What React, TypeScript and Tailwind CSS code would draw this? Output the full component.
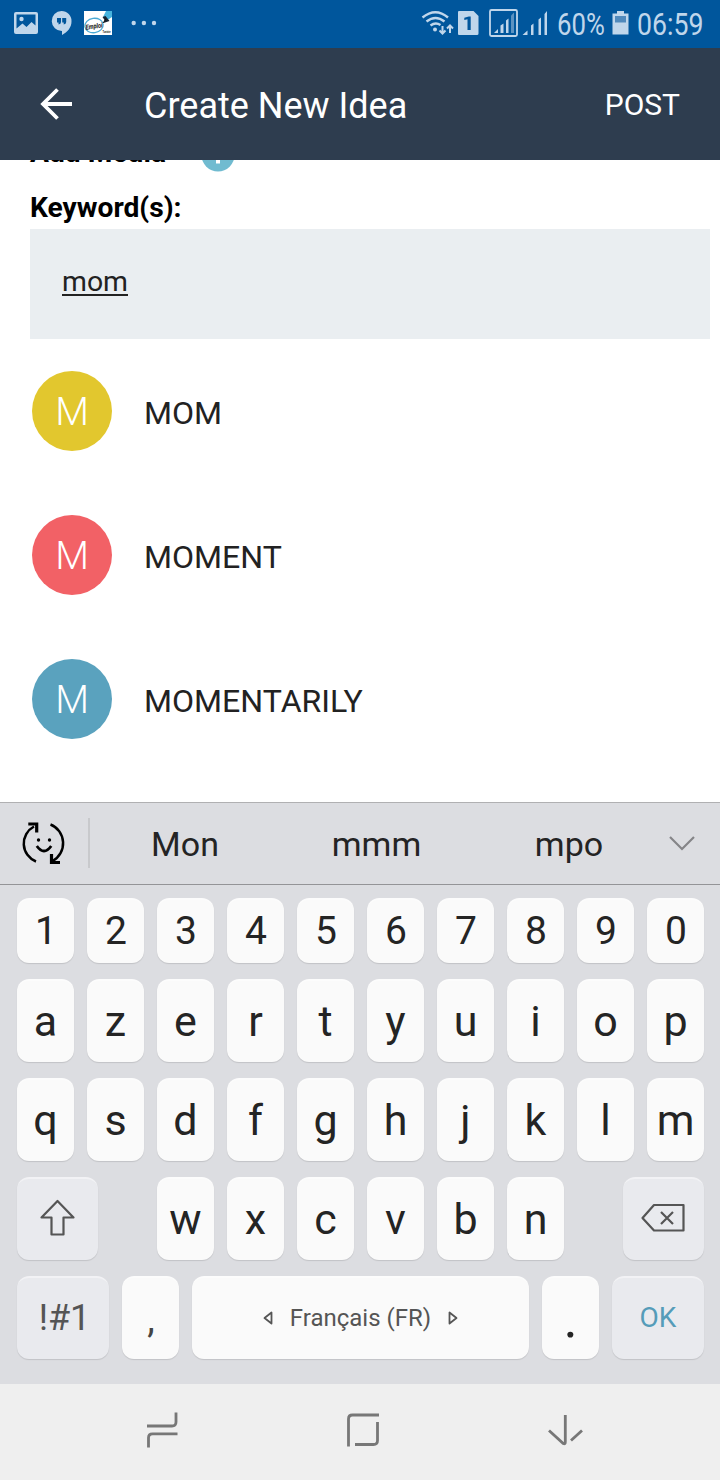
import React from "react";

type KeyProps = { children?: React.ReactNode; className?: string };

function Key({ children, className = "w-[57px] bg-[#fafafa] text-[#242424]" }: KeyProps) {
  return (
    <div
      className={`flex h-full shrink-0 items-center justify-center rounded-[12px] border-t-2 border-white/40 shadow-[0_1px_1px_rgba(0,0,0,0.12)] ${className}`}
    >
      {children}
    </div>
  );
}

function LetterRow({ letters }: { letters: string }) {
  return (
    <div className="flex h-[83px] gap-[13px] text-[43px] leading-none">
      {letters.split("").map((c) => (
        <Key key={c}>
          <span className="pb-px">{c}</span>
        </Key>
      ))}
    </div>
  );
}

function StatusBar() {
  return (
    <div className="flex h-12 shrink-0 items-center bg-[#00569c] text-[#c0d6eb]">
      <svg width="170" height="48" viewBox="0 0 170 48" className="shrink-0">
        <rect x="14" y="12" width="24" height="22" rx="2" fill="#c0d6eb" />
        <path d="M16.500 14.500h19v11l-4-3.500-5 5-4-3.500-6 5z" fill="#00569c" />
        <circle cx="21.500" cy="19" r="2.200" fill="#c0d6eb" />
        <path d="M61.500 11a10 10 0 0 1 10 10.500c0 6-4 10.500-9.500 13.500v-4a9.800 9.800 0 0 1-.5-20z" fill="#c0d6eb" />
        <path d="M57 18h4v4q0 2-2.500 2.500v-2H57zM62.200 18h4v4q0 2-2.500 2.500v-2h-1.500z" fill="#00569c" />
        <rect x="84" y="11" width="28" height="24" fill="#fff" />
        <ellipse cx="94" cy="25.500" rx="9.200" ry="7.200" fill="none" stroke="#4aa9d4" strokeWidth="1.300" transform="rotate(-8 94 25.500)" />
        <path d="M106 11h6v6l-6 4-3-4z" fill="#47b3dd" />
        <path d="M102.500 17l3-1 4 5-6 2 1-3z" fill="#172331" />
        <path d="M103 23l3-4" stroke="#111" strokeWidth="1" />
        <text x="85.500" y="28.500" fontSize="6.800" fontWeight="700" fontStyle="italic" fill="#111" fontFamily="Roboto, sans-serif" textLength="17" lengthAdjust="spacingAndGlyphs" transform="rotate(-8 94 26)">Emploi</text>
        <text x="102.500" y="33" fontSize="3.500" fontWeight="700" fill="#222" fontFamily="Roboto, sans-serif" textLength="8" lengthAdjust="spacingAndGlyphs">Tunisie</text>
        <circle cx="133.700" cy="23" r="2.200" fill="#c0d6eb" />
        <circle cx="143.900" cy="23" r="2.200" fill="#c0d6eb" />
        <circle cx="154" cy="23" r="2.200" fill="#c0d6eb" />
      </svg>
      <svg width="140" height="48" viewBox="410 0 140 48" className="ml-[240px] shrink-0">
        <g fill="none" stroke="#c0d6eb" strokeWidth="2.400">
          <path d="M422.500 17.500Q435.500 7 448 17.500" />
          <path d="M426.500 21.500Q435.500 14.500 444.500 21.500" />
          <path d="M430.500 25.500Q435.500 21.800 440.500 25" />
        </g>
        <circle cx="435" cy="29.500" r="2" fill="#c0d6eb" />
        <path d="M442.500 26v7.500M439.500 30.500l3 3 3-3M450 33v-7.500M447 28.500l3-3 3 3" fill="none" stroke="#c0d6eb" strokeWidth="2" />
        <path d="M459 11h14.500l5 5v17.500a1.500 1.500 0 0 1-1.500 1.500h-18a1 1 0 0 1-1-1V12a1 1 0 0 1 1-1z" fill="#c0d6eb" />
        <path d="M464.300 20v-2.300l4.500-1.200h1.900V30h-3.200V19.300z" fill="#00569c" />
        <rect x="490" y="10" width="27" height="26" rx="1.500" fill="none" stroke="#c0d6eb" strokeWidth="1.800" />
        <path d="M494 33l4-4v4zM500.500 25.500l3-2V33h-3zM506 20.500l2.500-2V33H506z" fill="#c0d6eb" />
        <path d="M511 15.500l3-3V33h-3z" fill="#5c92c1" />
        <path d="M522.500 35l5-4.500V35zM531 25.500l2.500-2V35H531zM538.500 19.500l2.500-2V35h-2.500zM544.500 14l2.500-3v24h-2.500z" fill="#c0d6eb" />
      </svg>
      <div className="ml-[7px] w-[47px] shrink-0">
        <span className="block w-max origin-left scale-x-[0.83] text-[31px] leading-none">60%</span>
      </div>
      <svg width="18" height="26" viewBox="0 0 18 26" className="mb-[3px] ml-[8px] shrink-0">
        <path d="M5 1h7v2.500h4.500V24.500h-16V3.500H5z" fill="#c0d6eb" />
        <rect x="3" y="6" width="11" height="6.500" fill="#5089bc" />
      </svg>
      <div className="ml-[7px] w-[70px] shrink-0">
        <span className="block w-max origin-left scale-x-[0.86] text-[31px] leading-none">06:59</span>
      </div>
    </div>
  );
}

function AppBar() {
  return (
    <div className="flex h-28 shrink-0 items-center justify-between bg-[#2e3d4f] pr-10 pl-10 text-white">
      <div className="flex items-center">
        <svg width="34" height="34" viewBox="0 0 34 34">
          <path d="M32 17H3M17.500 2.500L3 17l14.500 14.500" fill="none" stroke="#fff" strokeWidth="3.800" />
        </svg>
        <span className="ml-[70px] pt-1 text-[36px] leading-none">Create New Idea</span>
      </div>
      <span className="pt-0.5 text-[30px] leading-none">POST</span>
    </div>
  );
}

const ideas = [
  { label: "MOM", color: "bg-[#e2c72e]" },
  { label: "MOMENT", color: "bg-[#f26166]" },
  { label: "MOMENTARILY", color: "bg-[#5aa2be]" },
];

function Form() {
  return (
    <div className="h-[642px] shrink-0 overflow-hidden bg-white">
      <div className="mt-[-22px] flex h-[34px] items-start pl-[30px]">
        <span className="w-[171px] text-[28.200px] leading-[30px] font-bold text-black">Add Media</span>
        <svg width="34" height="34" viewBox="0 0 34 34">
          <circle cx="17" cy="17" r="16.500" fill="#70bbd0" />
          <path d="M17 8.500v17M8.500 17h17" stroke="#fff" strokeWidth="4" />
        </svg>
      </div>
      <div className="mt-[22px] h-[35px] pl-[30px] text-[28.200px] leading-[28px] font-bold text-black">Keyword(s):</div>
      <div className="mr-2.5 ml-[30px] h-[110px] bg-[#eaeef1] px-8 pt-10">
        <span className="block w-max border-b-2 border-[#222] text-[28.400px] leading-[25px] text-[#222]">mom</span>
      </div>
      <div className="mt-8 flex flex-col gap-16 pl-8">
        {ideas.map((i) => (
          <div key={i.label} className="flex h-20 items-center">
            <div className={`flex size-20 items-center justify-center rounded-full text-[39px] leading-none font-light text-white ${i.color}`}>
              <span className="pt-0.5">M</span>
            </div>
            <span className="ml-8 pt-1 text-[32.100px] leading-none text-[#222]">{i.label}</span>
          </div>
        ))}
      </div>
    </div>
  );
}

function Suggestions() {
  return (
    <div className="flex h-[83px] shrink-0 items-center border-t border-b border-t-[#b0b0b2] border-b-[#949497] text-[34px] leading-none text-[#242424]">
      <svg width="88" height="80" viewBox="0 804 88 80" className="shrink-0">
        <g fill="none" stroke="#000" strokeWidth="2.500">
          <path d="M37.500 861.500A19.300 19.300 0 0 1 35.500 826.500" transform="translate(-1.500 0)" />
          <path d="M50.500 824.500A19.500 20 0 0 1 52.500 861" />
          <path d="M28.300 824H36.700v8.500" strokeWidth="3.200" />
          <path d="M60 862.500H51.500v-8.500" strokeWidth="3.200" />
          <path d="M36.800 846Q44 856 51.200 846" strokeWidth="2.800" />
        </g>
        <circle cx="38.500" cy="840" r="1.700" />
        <circle cx="49.500" cy="840" r="1.700" />
      </svg>
      <div className="mb-px h-[50px] w-0.5 bg-[#c8c9cc]" />
      <span className="w-[190px] text-center">Mon</span>
      <span className="w-[193px] text-center">mmm</span>
      <span className="w-[192px] text-center">mpo</span>
      <svg width="28" height="18" viewBox="0 0 28 18" className="mb-0.5 ml-[3px]">
        <path d="M2 3l12 12L26 3" fill="none" stroke="#858588" strokeWidth="2.200" />
      </svg>
    </div>
  );
}

const grey = "bg-[#e9eaee] text-[#555]";

function Keyboard() {
  return (
    <div className="flex h-[582px] shrink-0 flex-col bg-[#dcdde1]">
      <Suggestions />
      <div className="flex flex-col gap-4 pt-[13px] pl-[17px]">
        <div className="flex h-[65px] gap-[13px] text-[39px] leading-none">
          {"1234567890".split("").map((c) => (
            <Key key={c}>
              <span className="pb-px pl-px">{c}</span>
            </Key>
          ))}
        </div>
        <LetterRow letters="azertyuiop" />
        <LetterRow letters="qsdfghjklm" />
        <div className="flex h-[83px]">
          <Key className={`w-[81px] ${grey}`}>
            <svg width="38" height="38" viewBox="0 0 38 38" className="mb-[3px]">
              <path d="M18.500 2L34.500 18.500H24.500V35.500H12.500V18.500H2.500z" fill="none" stroke="#555" strokeWidth="2.200" strokeLinejoin="round" />
            </svg>
          </Key>
          <div className="mx-[59px]">
            <LetterRow letters="wxcvbn" />
          </div>
          <Key className={`w-[81px] ${grey}`}>
            <svg width="44" height="30" viewBox="0 0 44 30" className="mr-0.5 mb-[3px]">
              <path d="M13 2H42.500V27.500H13L1.500 15z" fill="none" stroke="#555" strokeWidth="2.200" strokeLinejoin="round" />
              <path d="M20 9l12 12M32 9L20 21" stroke="#555" strokeWidth="2.200" />
            </svg>
          </Key>
        </div>
        <div className="flex h-[83px] gap-[13px] leading-none">
          <Key className={`w-[92px] text-[36px] ${grey}`}>
            <span className="pb-0.5 pl-[3px]">!#1</span>
          </Key>
          <Key className="w-[57px] bg-[#fafafa] text-[38px] text-[#444]">
            <span className="pl-px">,</span>
          </Key>
          <Key className="w-[337px] gap-[17px] bg-[#fafafa] text-[24px] text-[#555]">
            <svg width="10" height="14" viewBox="0 0 10 14" className="mb-0.5">
              <path d="M8.500 1.500v11L1.500 7z" fill="none" stroke="#555" strokeWidth="1.800" strokeLinejoin="round" />
            </svg>
            <span className="pb-px">Français (FR)</span>
            <svg width="10" height="14" viewBox="0 0 10 14" className="mb-0.5">
              <path d="M1.500 1.500v11L8.500 7z" fill="none" stroke="#555" strokeWidth="1.800" strokeLinejoin="round" />
            </svg>
          </Key>
          <Key className="w-[57px] bg-[#fafafa] text-[54px] text-[#242424]">
            <span>.</span>
          </Key>
          <Key className="w-[92px] bg-[#e9eaee] text-[28px] text-[#559cb9]">
            <span className="pb-0.5">OK</span>
          </Key>
        </div>
      </div>
    </div>
  );
}

function NavBar() {
  return (
    <div className="flex h-24 shrink-0 items-start bg-[#efefef]">
      <svg width="720" height="96" viewBox="0 1384 720 96" fill="none" stroke="#777" strokeWidth="2.800">
        <path d="M147 1426h25q4 0 4-4v-9.500" />
        <path d="M177.500 1433.800h-25q-4 0-4 4v9.700" />
        <path d="M348.500 1446.500V1419q0-4 4-4H379" />
        <path d="M377.500 1422v18.500q0 4-4 4H355" />
        <path d="M565.300 1415v27q0 2.500-2 1.500L549 1430.500M571 1440.500l11-10" />
      </svg>
    </div>
  );
}

export default function App() {
  return (
    <div className="flex h-[1480px] w-[720px] flex-col overflow-hidden bg-white font-[Roboto,sans-serif]">
      <StatusBar />
      <AppBar />
      <Form />
      <Keyboard />
      <NavBar />
    </div>
  );
}
